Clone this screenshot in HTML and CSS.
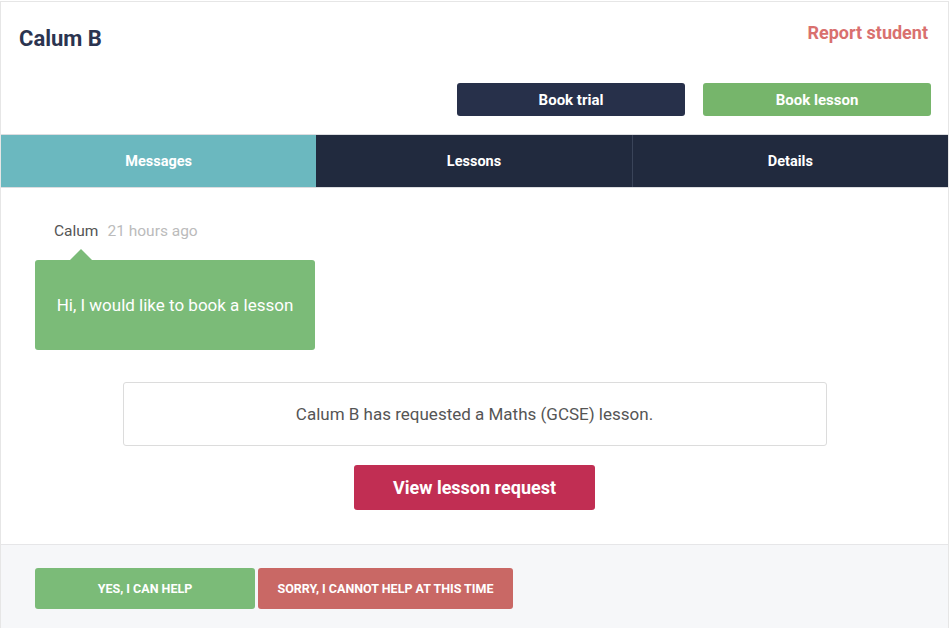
FILE: index.html
```html
<!DOCTYPE html>
<html lang="en">
<head>
  <meta charset="UTF-8">
  <meta name="viewport" content="width=device-width, initial-scale=1.0">
  <title>Calum B</title>
  <link rel="stylesheet" href="styles.css">
</head>
<body>
  <div id="page">
    <div id="header">
      <div class="top">
        <h1>Calum B</h1>
        <a class="report" href="#">Report student</a>
      </div>
      <div class="actions">
        <button class="btn dark">Book trial</button>
        <button class="btn green">Book lesson</button>
      </div>
    </div>

    <div id="tabs">
      <div class="tab active">Messages</div>
      <div class="tab">Lessons</div>
      <div class="tab">Details</div>
    </div>

    <div id="messages">
      <div class="meta"><span class="author">Calum</span><span class="time">21 hours ago</span></div>
      <div class="bubble">Hi, I would like to book a lesson</div>
      <div class="notice">Calum B has requested a Maths (GCSE) lesson.</div>
      <div class="center">
        <button class="btn request">View lesson request</button>
      </div>
    </div>

    <div id="footer">
      <button class="btn yes">Yes, I can help</button>
      <button class="btn no">Sorry, I cannot help at this time</button>
    </div>
  </div>
</body>
</html>
```

FILE: styles.css
```css
html, body {
  margin: 0;
  padding: 0;
  font-family: Roboto, "Liberation Sans", sans-serif;
  background: #fff;
}
#page {
  width: 947px;
  height: 626px;
  margin-top: 1px;
  border: 1px solid #e6e6e6;
  border-bottom: none;
  display: flex;
  flex-direction: column;
  overflow: hidden;
}
#header {
  padding: 20px 17px 0 18px;
}
#header .top {
  display: flex;
  justify-content: space-between;
  align-items: flex-start;
}
#header h1 {
  margin: 0;
  font-size: 22px;
  line-height: 34px;
  font-weight: 700;
  color: #2b3450;
}
.report {
  font-size: 18px;
  line-height: 22px;
  font-weight: 700;
  color: #d9706e;
  text-decoration: none;
  margin-right: 3px;
}
#header .actions {
  display: flex;
  justify-content: flex-end;
  gap: 18px;
  margin-top: 27px;
  padding-bottom: 18px;
}
.btn {
  border: none;
  border-radius: 3px;
  color: #fff;
  font-family: inherit;
  font-weight: 700;
  cursor: pointer;
}
#header .btn {
  width: 228px;
  height: 33px;
  font-size: 15px;
}
.dark { background: #27304a; }
.green { background: #76b56b; }

#tabs {
  display: flex;
  border-top: 1px solid #dcdde0;
  border-bottom: 1px solid #dcdde0;
  background: #212a3e;
}
.tab {
  flex: 1;
  height: 52px;
  display: flex;
  align-items: center;
  justify-content: center;
  color: #fff;
  font-size: 14.5px;
  font-weight: 700;
}
.tab + .tab {
  border-left: 1px solid #3a4459;
}
.tab.active {
  background: #6bb8bf;
}
.tab.active + .tab {
  border-left: none;
}

#messages {
  flex: 1;
  padding: 33px 34px 0 34px;
  border-bottom: 1px solid #e6e6e8;
}
.meta {
  font-size: 15.5px;
  line-height: 20px;
  padding-left: 19px;
}
.author {
  color: #555;
  margin-right: 9px;
}
.time {
  color: #bbb;
}
.bubble {
  position: relative;
  width: 280px;
  height: 90px;
  margin-top: 19px;
  background: #7bbb78;
  border-radius: 3px;
  color: #fff;
  font-size: 17px;
  display: flex;
  align-items: center;
  justify-content: center;
}
.bubble::before {
  content: "";
  position: absolute;
  top: -11px;
  left: 35px;
  border-left: 11px solid transparent;
  border-right: 11px solid transparent;
  border-bottom: 11px solid #7bbb78;
}
.notice {
  width: 702px;
  height: 62px;
  margin: 32px auto 0 auto;
  border: 1px solid #dcdcdc;
  border-radius: 3px;
  display: flex;
  align-items: center;
  justify-content: center;
  color: #555;
  font-size: 17px;
}
.center {
  display: flex;
  justify-content: center;
  margin-top: 19px;
}
.request {
  width: 241px;
  height: 45px;
  background: #c12e53;
  font-size: 18px;
}

#footer {
  height: 83px;
  background: #f6f7f9;
  display: flex;
  align-items: flex-start;
  gap: 3px;
  padding: 23px 34px 0 34px;
  box-sizing: border-box;
}
#footer .btn {
  height: 41px;
  font-size: 12.5px;
  text-transform: uppercase;
}
.yes {
  width: 220px;
  background: #7bbb78;
}
.no {
  width: 255px;
  background: #c96865;
}
```
